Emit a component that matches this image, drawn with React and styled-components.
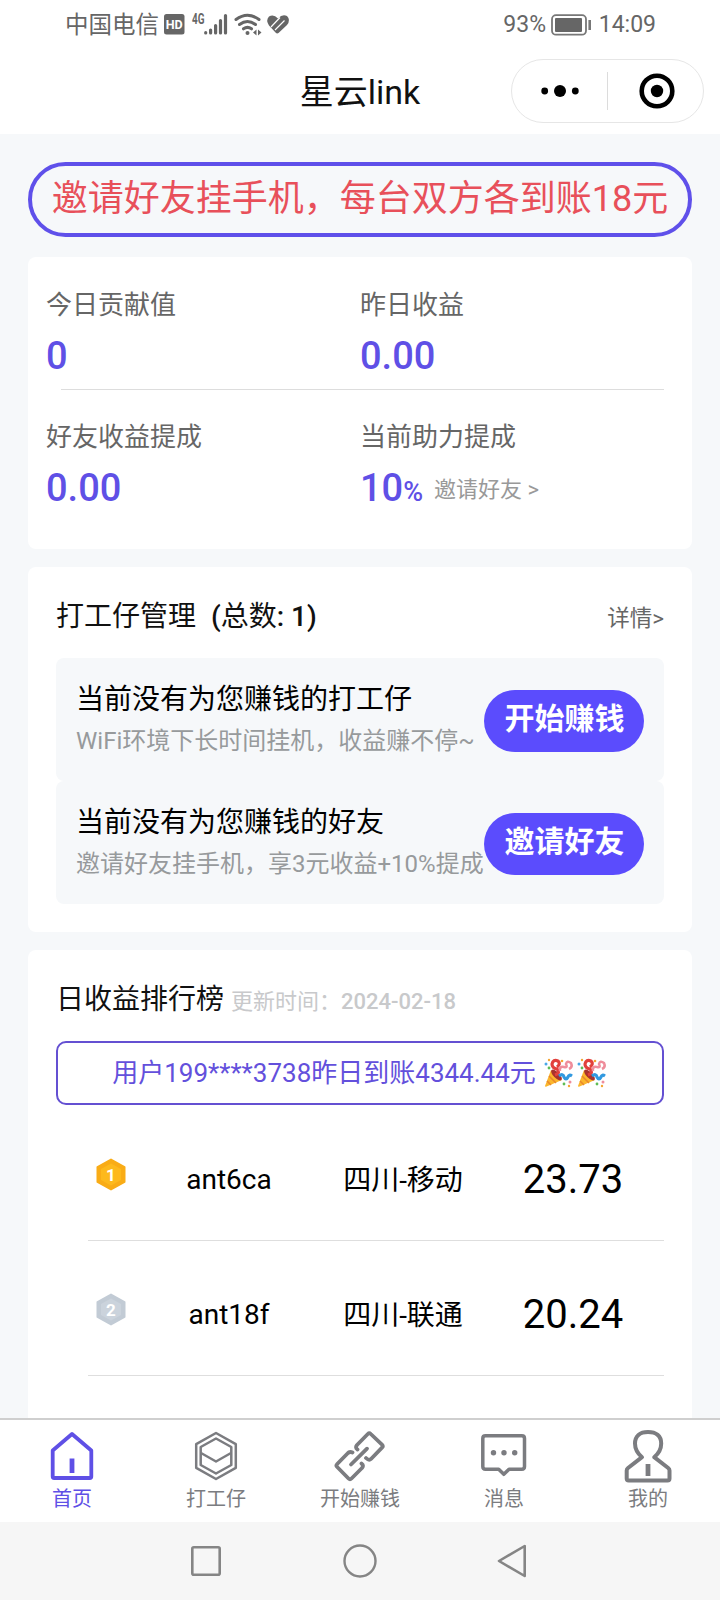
import React from 'react';
import styled, { createGlobalStyle } from 'styled-components';

const GlobalStyle = createGlobalStyle`
  * {
    box-sizing: border-box;
  }

  body {
    margin: 0;
    background-color: #f6f8fa;
    font-family: Roboto, 'Noto Sans CJK SC', sans-serif;
    color: #111;
  }

  svg {
    display: block;
    flex-shrink: 0;
  }
`;

const Page = styled.div`
  width: 720px;
  height: 1600px;
  display: flex;
  flex-direction: column;
  overflow: hidden;
  white-space: nowrap;
`;

// 状态栏
const StatusBar = styled.div`
  height: 50px;
  padding: 0 64px 0 65px;
  display: flex;
  align-items: center;
  justify-content: space-between;
  background-color: #fff;
  color: #666;
  font-size: 23px;
`;

const StatusGroup = styled.div`
  display: flex;
  align-items: center;
`;

const Carrier = styled.span`
  width: 98px;
  font-size: 23.5px;
  line-height: 52px;
`;

const StatusText = styled.span`
  line-height: 52px;
  margin-right: ${(props) => props.$gap || 0}px;
`;

// 导航栏
const NavBar = styled.header`
  height: 84px;
  display: grid;
  grid-template-columns: 1fr auto 1fr;
  align-items: center;
  padding: 0 16px;
  background-color: #fff;
`;

const NavTitle = styled.h1`
  grid-column: 2;
  margin: 0;
  font-size: 34px;
  font-weight: 400;
  line-height: 84px;
`;

const Capsule = styled.div`
  justify-self: end;
  width: 193px;
  height: 64px;
  margin-bottom: 2px;
  display: grid;
  grid-template-columns: 95px 1fr;
  align-items: center;
  border: 1px solid #e6e6e6;
  border-radius: 32px;
`;

const CapsuleItem = styled.div`
  height: 38px;
  display: flex;
  align-items: center;
  justify-content: center;

  & + & {
    padding-left: 2px;
    border-left: 1px solid #dcdcdc;
  }
`;

const Content = styled.main`
  flex: 1;
  min-height: 0;
  overflow: hidden;
  padding: 28px 28px 0;
`;

const Banner = styled.div`
  height: 75px;
  margin-bottom: 20px;
  border: 4px solid #5f50ea;
  border-radius: 38px;
  color: #e8505a;
  font-size: 36px;
  line-height: 66px;
  text-align: center;
`;

const Card = styled.section`
  height: ${(props) => props.$height}px;
  margin-bottom: 18px;
  padding: ${(props) => props.$padding || '28px'};
  border-radius: 8px;
  background-color: #fff;
`;

const StatGrid = styled.div`
  display: grid;
  grid-template-columns: 314px 1fr;
  height: ${(props) => props.$height}px;
`;

const Stat = styled.div`
  display: flex;
  flex-direction: column;
`;

const StatLabel = styled.div`
  height: 40px;
  line-height: 40px;
  font-size: 26px;
  color: #666;
`;

const StatValue = styled.div`
  height: 62px;
  display: flex;
  align-items: baseline;
  line-height: 62px;
  font-size: 38px;
  font-weight: 500;
  color: #5f50e6;
`;

const Percent = styled.span`
  font-size: 27px;
`;

const InviteLink = styled.span`
  align-self: flex-start;
  margin-left: 11px;
  padding-top: 2px;
  font-size: 22px;
  font-weight: 400;
  color: #999;
`;

const StatDivider = styled.div`
  height: 1px;
  margin: 0 9px 27px 15px;
  background-color: #ddd;
`;

const CardHeader = styled.div`
  height: ${(props) => props.$height}px;
  display: flex;
  align-items: baseline;
  line-height: 44px;
`;

const CardTitle = styled.h2`
  margin: 0;
  font-size: 28px;
  font-weight: ${(props) => (props.$medium ? 500 : 400)};
`;

const TitleText = styled.span`
  margin-right: 15px;
  font-weight: 400;
`;

const TotalLabel = styled.span`
  font-weight: 400;
`;

const Detail = styled.span`
  margin-left: auto;
  font-size: 22.5px;
  line-height: 42px;
  align-self: flex-start;
  padding-top: 2px;
  color: #666;
`;

const UpdateTime = styled.span`
  margin-left: 7px;
  font-size: 22px;
  color: #c8c9cb;
`;

const UpdateDate = styled.span`
  font-weight: 500;
`;

const WorkerItem = styled.div`
  height: 123px;
  padding: 0 20px;
  display: flex;
  align-items: center;
  justify-content: space-between;
  border-radius: 8px;
  background-color: #f6f8fa;
`;

const WorkerText = styled.div`
  width: 407px;
  height: 81px;
`;

const WorkerTitle = styled.div`
  font-size: 28px;
  line-height: 42px;
  color: #000;
`;

const WorkerDesc = styled.div`
  font-size: 24px;
  line-height: 41px;
  color: #979a9c;
`;

const PillButton = styled.button`
  width: 160px;
  height: 62px;
  flex-shrink: 0;
  padding: 0 0 4px 1px;
  margin-top: 3px;
  border: none;
  border-radius: 31px;
  background-color: #5b4cfd;
  color: #fff;
  font-family: inherit;
  font-size: 30px;
  font-weight: 700;
  line-height: 54px;
`;

const Notice = styled.div`
  height: 64px;
  margin-bottom: 1px;
  display: flex;
  align-items: center;
  justify-content: center;
  border: 2px solid #6450d2;
  border-radius: 10px;
  color: #6350dc;
  font-size: 26px;
  line-height: 60px;
`;

const NoticeText = styled.span`
  margin-right: 6px;
`;

const RankRow = styled.div`
  height: 135px;
  margin-left: 32px;
  padding: 2px 2px 0 8px;
  display: grid;
  grid-template-columns: 40px 186px 162px 1fr;
  align-items: center;
  border-bottom: 1px solid #dedede;
  text-align: center;
  font-size: 28px;
  color: #000;
`;

const RankCell = styled.span`
  padding-top: ${(props) => props.$top}px;
`;

const RankValue = styled.span`
  padding-top: 11px;
  font-size: 40px;
`;

// 底部标签栏
const TabBar = styled.nav`
  height: 104px;
  display: grid;
  grid-template-columns: repeat(5, 1fr);
  border-top: 2px solid #cfcfcf;
  background-color: #fff;
`;

const Tab = styled.div`
  display: flex;
  flex-direction: column;
  align-items: center;
  padding-top: 8px;
  font-size: 20px;
  line-height: 31px;
  color: ${(props) => (props.$active ? '#5f50e6' : '#7b7c80')};
`;

const SystemNav = styled.div`
  height: 78px;
  display: flex;
  justify-content: center;
  align-items: center;
  gap: 118px;
  background-color: #f6f6f6;
`;

const StatusIcons = () => (
  <svg width="130" height="30" viewBox="163 10 130 30">
    <rect x="164" y="14" width="20.500" height="20.500" rx="2.500" fill="#666" />
    <text x="165.700" y="29" fontSize="13.500" fontWeight="700" fill="#fff" textLength="17" lengthAdjust="spacingAndGlyphs">HD</text>
    <text x="192" y="23.500" fontSize="14" fontWeight="700" fill="#666" textLength="12.500" lengthAdjust="spacingAndGlyphs">4G</text>
    <g stroke="#666" strokeWidth="3.200" strokeLinecap="round">
      <path d="M205.700 32.700v.3M210.600 30v3M215.600 25.500v7.500M220.500 20.500v12.500M225.500 15.500v17.500" />
    </g>
    <g fill="none" stroke="#666" strokeWidth="3" strokeLinecap="round">
      <path d="M236 19.500q11.500-8.500 23 0M239.500 24.500q8-6 16 0M243.500 28.800q4-2.800 8 0" />
    </g>
    <circle cx="247.500" cy="33" r="2" fill="#666" />
    <path d="M256.500 29.500v6l-3.500-3zM258 29.500v6l3.500-3z" fill="#666" />
    <path d="M278 18.500Q282.500 13.500 287 16Q291 20 287 25L278.500 33Q277 34 275.500 32.500L269 25.500Q265.500 20 269 16.500Q273.500 13.500 278 18.500z" fill="#666" />
    <path d="M280 17.500L271 27M284.500 20.500L275 30" stroke="#fff" strokeWidth="1.200" />
  </svg>
);

const BatteryIcon = () => (
  <svg width="42" height="22" viewBox="0 0 42 22">
    <rect x="1" y="1.200" width="34" height="19.500" rx="4" fill="none" stroke="#777" strokeWidth="1.800" />
    <rect x="4" y="4" width="27" height="14" rx="1" fill="#666" />
    <path d="M38.700 6v10" stroke="#777" strokeWidth="2.600" />
  </svg>
);

const MoreIcon = () => (
  <svg width="40" height="14" viewBox="0 0 40 14">
    <circle cx="4.700" cy="7" r="3.400" />
    <circle cx="20" cy="7" r="6" />
    <circle cx="35.300" cy="7" r="3.400" />
  </svg>
);

const CloseIcon = () => (
  <svg width="36" height="36" viewBox="0 0 36 36">
    <circle cx="18" cy="18" r="15.300" fill="none" stroke="#000" strokeWidth="4.600" />
    <circle cx="18" cy="18" r="6.200" />
  </svg>
);

const PartyIcon = () => (
  <svg width="33" height="32" viewBox="0 0 33 32">
    <path d="M9 13l-6 16q0 1 1 .8L20 23z" fill="#fbb62c" />
    <path d="M7 19l7 7M5 24l4 4" stroke="#e9872b" strokeWidth="1.500" />
    <ellipse cx="14.500" cy="18" rx="3" ry="7" transform="rotate(-45 14.5 18)" fill="#a8322d" />
    <path d="M13 18q6-2 2-6q-5-1-5-5q1-5 6-3q3 3-1 6" fill="none" stroke="#e2403c" strokeWidth="3.200" />
    <path d="M18 14q-1-5 4-4q4 1 2-3q1-4 5-1q2 4-2 6" fill="none" stroke="#ef8d9b" strokeWidth="2.600" />
    <path d="M17 19q4-3 5 1q2 4 4 0q1-3 4-1" fill="none" stroke="#3199e0" strokeWidth="3.200" />
    <circle cx="4" cy="7" r="1.500" fill="#4aa8e8" />
    <circle cx="7" cy="11" r="1.400" fill="#5ebd55" />
    <circle cx="20" cy="4" r="1.300" fill="#f4a634" />
    <circle cx="7" cy="3" r="1.200" fill="#f4a634" />
    <circle cx="22" cy="27" r="1.400" fill="#5ebd55" />
    <circle cx="28" cy="25" r="1.500" fill="#ef8d9b" />
    <circle cx="27" cy="29" r="1.200" fill="#f4a634" />
  </svg>
);

const Medal = ({ rank }) => {
  const [outer, inner] = rank === 1 ? ['#f9ac16', '#fdb91c'] : ['#c2cbd5', '#cbd3dc'];
  return (
    <svg width="30" height="33" viewBox="0 0 30 33">
      <path d="M15 1.500L28.500 9v15L15 31.500L1.500 24V9z" fill={outer} stroke={outer} strokeWidth="2" strokeLinejoin="round" />
      <path d="M15 5.500L25 11v11L15 27.500L5 22V11z" fill={inner} />
      <text x="15" y="22.500" textAnchor="middle" fontSize="17" fontWeight="700" fill="#fff">{rank}</text>
    </svg>
  );
};

const HomeIcon = () => (
  <svg width="52" height="56" viewBox="0 0 52 56" fill="none" stroke="currentColor" strokeWidth="3.800" strokeLinejoin="round">
    <path d="M26 6L45.300 22.500V48.500q0 1.500-1.500 1.500H8.200q-1.500 0-1.500-1.500V22.500z" />
    <path d="M26 30.500v14.500" strokeWidth="4.800" />
  </svg>
);

const BoxIcon = () => (
  <svg width="52" height="56" viewBox="0 0 52 56" fill="none" stroke="currentColor" strokeWidth="2.500" strokeLinejoin="round">
    <path d="M26 5L45.800 16.200V39.800L26 51L6.200 39.800V16.200z" />
    <path d="M26 10.500L41.300 19V37L26 45.500L10.700 37V19z" />
    <path d="M11 25l15 8.500L41 25" />
  </svg>
);

const LinkIcon = () => (
  <svg width="52" height="56" viewBox="0 0 52 56" fill="none" stroke="currentColor" strokeWidth="3.800" strokeLinecap="round" strokeLinejoin="round">
    <path d="M23.500 21.500Q21 19.500 23 17L33.800 6q1.500-1.500 3 0L48 16.700q1.500 1.500 0 3L37 31q-2 2-5-1" />
    <path d="M18.500 24.500Q15.500 23 13.500 25.500L3.200 36q-1.500 1.500 0 3L14.500 50.500q1.500 1.500 3 0L28 40Q30 37.500 27.500 35.500" />
    <path d="M17 36.500L33 20.700" />
  </svg>
);

const MessageIcon = () => (
  <svg width="52" height="56" viewBox="0 0 52 56" fill="none" stroke="currentColor" strokeWidth="3.500" strokeLinejoin="round">
    <path d="M7.500 7.800H43.800q2.700 0 2.700 2.700V38.500q0 2.700-2.700 2.700H31L25.800 46.300L20.700 41.200H7.500q-2.700 0-2.700-2.700V10.500q0-2.700 2.700-2.700z" />
    <g fill="currentColor" stroke="none">
      <circle cx="15.500" cy="24.700" r="2.700" />
      <circle cx="26" cy="24.700" r="2.700" />
      <circle cx="36.700" cy="24.700" r="2.700" />
    </g>
  </svg>
);

const UserIcon = () => (
  <svg width="52" height="56" viewBox="0 0 52 56" fill="none" stroke="currentColor" strokeWidth="4" strokeLinejoin="round">
    <path d="M20 29.200C15 25 13 20.500 13 15.500C13 8 17.800 3.900 26 3.900S39.200 8 39.200 15.500C39.200 20.500 37.300 25 32.200 29.200L46.200 40Q47.500 41 47.500 42.500V50.500q0 2-2 2H6.700q-2 0-2-2V42.500Q4.700 41 6 40z" />
    <path d="M26 36v12" strokeWidth="4.800" />
  </svg>
);

const workers = [
  { title: '当前没有为您赚钱的打工仔', desc: 'WiFi环境下长时间挂机，收益赚不停~', button: '开始赚钱' },
  { title: '当前没有为您赚钱的好友', desc: '邀请好友挂手机，享3元收益+10%提成', button: '邀请好友' },
];

const ranks = [
  { name: 'ant6ca', area: '四川-移动', value: '23.73' },
  { name: 'ant18f', area: '四川-联通', value: '20.24' },
];

const tabs = [
  { label: '首页', Icon: HomeIcon },
  { label: '打工仔', Icon: BoxIcon },
  { label: '开始赚钱', Icon: LinkIcon },
  { label: '消息', Icon: MessageIcon },
  { label: '我的', Icon: UserIcon },
];

const App = () => {
  return (
    <Page>
      <GlobalStyle />
      <StatusBar>
        <StatusGroup>
          <Carrier>中国电信</Carrier>
          <StatusIcons />
        </StatusGroup>
        <StatusGroup>
          <StatusText $gap={5}>93%</StatusText>
          <BatteryIcon />
          <StatusText>&nbsp;14:09</StatusText>
        </StatusGroup>
      </StatusBar>
      <NavBar>
        <NavTitle>星云link</NavTitle>
        <Capsule>
          <CapsuleItem><MoreIcon /></CapsuleItem>
          <CapsuleItem><CloseIcon /></CapsuleItem>
        </Capsule>
      </NavBar>

      <Content>
        <Banner>邀请好友挂手机，每台双方各到账18元</Banner>

        <Card $height={292} $padding="28px 19px 0 18px">
          <StatGrid $height={104}>
            <Stat>
              <StatLabel>今日贡献值</StatLabel>
              <StatValue>0</StatValue>
            </Stat>
            <Stat>
              <StatLabel>昨日收益</StatLabel>
              <StatValue>0.00</StatValue>
            </Stat>
          </StatGrid>
          <StatDivider />
          <StatGrid $height={105}>
            <Stat>
              <StatLabel>好友收益提成</StatLabel>
              <StatValue>0.00</StatValue>
            </Stat>
            <Stat>
              <StatLabel>当前助力提成</StatLabel>
              <StatValue>
                10<Percent>%</Percent>
                <InviteLink>邀请好友 &gt;</InviteLink>
              </StatValue>
            </Stat>
          </StatGrid>
        </Card>

        <Card $height={365}>
          <CardHeader $height={63}>
            <CardTitle $medium>
              <TitleText>打工仔管理</TitleText>
              (<TotalLabel>总数</TotalLabel>: 1)
            </CardTitle>
            <Detail>详情&gt;</Detail>
          </CardHeader>
          {workers.map((item) => (
            <WorkerItem key={item.title}>
              <WorkerText>
                <WorkerTitle>{item.title}</WorkerTitle>
                <WorkerDesc>{item.desc}</WorkerDesc>
              </WorkerText>
              <PillButton>{item.button}</PillButton>
            </WorkerItem>
          ))}
        </Card>

        <Card $height={500}>
          <CardHeader $height={63}>
            <CardTitle>日收益排行榜</CardTitle>
            <UpdateTime>
              更新时间：<UpdateDate>2024-02-18</UpdateDate>
            </UpdateTime>
          </CardHeader>
          <Notice>
            <NoticeText>用户199****3738昨日到账4344.44元</NoticeText>
            <PartyIcon />
            <PartyIcon />
          </Notice>
          {ranks.map((item, index) => (
            <RankRow key={item.name}>
              <Medal rank={index + 1} />
              <RankCell $top={10}>{item.name}</RankCell>
              <RankCell $top={7}>{item.area}</RankCell>
              <RankValue>{item.value}</RankValue>
            </RankRow>
          ))}
        </Card>
      </Content>

      <TabBar>
        {tabs.map(({ label, Icon }, index) => (
          <Tab key={label} $active={index === 0}>
            <Icon />
            {label}
          </Tab>
        ))}
      </TabBar>
      <SystemNav>
        <svg width="36" height="36" viewBox="0 0 36 36" fill="none" stroke="#858585" strokeWidth="2.600">
          <rect x="4.300" y="4.300" width="27.400" height="27.400" rx="1.500" />
        </svg>
        <svg width="36" height="36" viewBox="0 0 36 36" fill="none" stroke="#858585" strokeWidth="2.400">
          <circle cx="18" cy="18" r="15.500" />
        </svg>
        <svg width="36" height="36" viewBox="0 0 36 36" fill="none" stroke="#858585" strokeWidth="2.600" strokeLinejoin="round">
          <path d="M28.700 3v30L3 18z" />
        </svg>
      </SystemNav>
    </Page>
  );
};

export default App;
